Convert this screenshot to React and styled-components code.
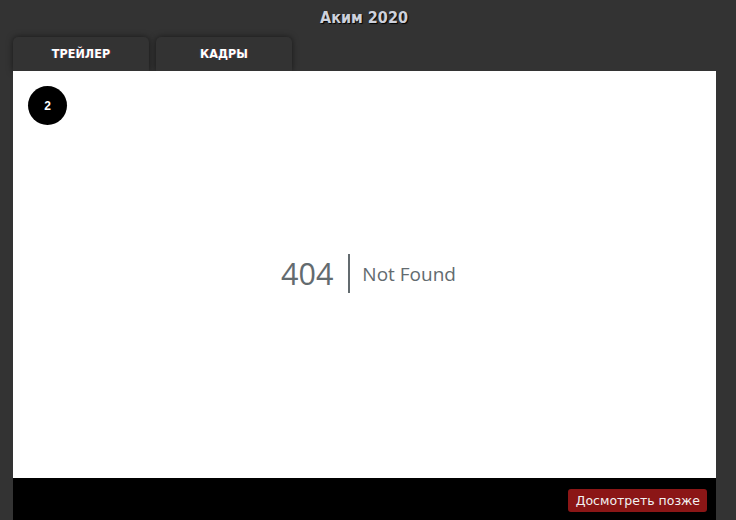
import React from 'react';
import styled, { createGlobalStyle } from 'styled-components';

const GlobalStyle = createGlobalStyle`
    html, body {
        margin: 0;
        padding: 0;
        background: #333333;
        overflow: hidden;
    }
`;

const Page = styled.div`
    width: 736px;
    height: 520px;
    background: #333333;
    display: flex;
    flex-direction: column;
    font-family: "DejaVu Sans", sans-serif;
`;

const Title = styled.h1`
    margin: 0;
    height: 37px;
    display: flex;
    justify-content: center;
    align-items: center;
    padding: 0 8px 3px 0;
    box-sizing: border-box;
    font-family: "DejaVu Sans Condensed", "DejaVu Sans", sans-serif;
    font-size: 16px;
    font-weight: bold;
    color: #cdd1dc;
    text-shadow: 1px 1px 1px #000;
`;

const Tabs = styled.div`
    display: flex;
    gap: 7px;
    padding-left: 13px;
    height: 34px;
`;

const Tab = styled.button`
    width: 136px;
    height: 34px;
    border: none;
    border-radius: 5px 5px 0 0;
    background: #333333;
    box-shadow: 0 0 6px rgba(0, 0, 0, .55);
    color: #fff;
    font-family: "DejaVu Sans Condensed", "DejaVu Sans", sans-serif;
    font-size: 12.5px;
    font-weight: bold;
    padding: 0 0 1px;
    cursor: pointer;
    text-shadow: 1px 0 0 rgba(255, 0, 0, .25), -1px 0 0 rgba(0, 160, 255, .25);
`;

const Player = styled.div`
    margin-left: 13px;
    width: 703px;
    flex: 1;
    display: flex;
    flex-direction: column;
    position: relative;
    z-index: 1;
`;

const Screen = styled.div`
    height: 407px;
    background: #fff;
    display: flex;
    justify-content: center;
    align-items: center;
    position: relative;
`;

const Badge = styled.div`
    position: absolute;
    left: 15px;
    top: 15px;
    width: 39px;
    height: 39px;
    border-radius: 50%;
    background: #000;
    color: #fff;
    display: flex;
    justify-content: center;
    align-items: center;
    font-family: "Liberation Sans", Arial, sans-serif;
    font-size: 12px;
    font-weight: bold;
`;

const ErrorBox = styled.div`
    display: flex;
    align-items: center;
    font-family: "Open Sans", Lato, sans-serif;
    color: #636b6f;
    margin-left: -7px;
    margin-top: -2px;
`;

const Code = styled.div`
    font-size: 30.5px;
    padding: 0 15px;
    border-right: 2px solid #636b6f;
    line-height: 39px;
`;

const Message = styled.div`
    font-size: 19px;
    margin-left: 12px;
`;

const Controls = styled.div`
    flex: 1;
    background: #000;
    display: flex;
    justify-content: flex-end;
    align-items: flex-start;
    padding: 11px 9px 0 0;
`;

const LaterButton = styled.button`
    height: 23px;
    padding: 0 7px 0 8px;
    border: none;
    border-radius: 3px;
    background: #8b1616;
    color: #f2f2f2;
    font-family: "DejaVu Sans", sans-serif;
    font-size: 12.5px;
    cursor: pointer;
`;

export default function App() {
    return (
        <>
            <GlobalStyle />
            <Page>
                <Title>Аким 2020</Title>
                <Tabs>
                    <Tab>ТРЕЙЛЕР</Tab>
                    <Tab>КАДРЫ</Tab>
                </Tabs>
                <Player>
                    <Screen>
                        <Badge>2</Badge>
                        <ErrorBox>
                            <Code>404</Code>
                            <Message>Not Found</Message>
                        </ErrorBox>
                    </Screen>
                    <Controls>
                        <LaterButton>Досмотреть позже</LaterButton>
                    </Controls>
                </Player>
            </Page>
        </>
    );
}
